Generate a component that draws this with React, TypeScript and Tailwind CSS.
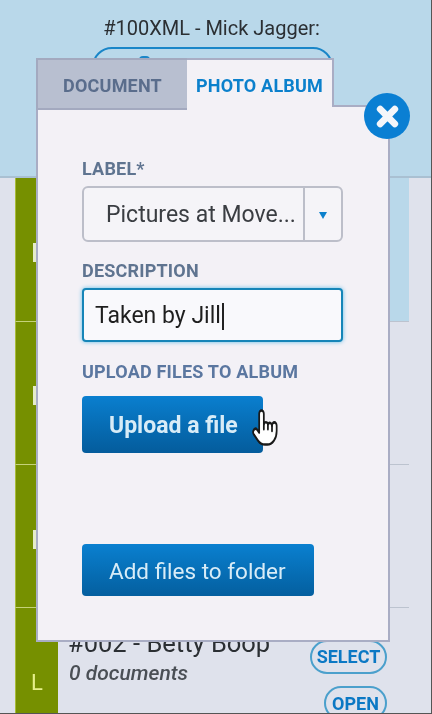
import { FC } from "react";

const font = "font-['Roboto',sans-serif]";

const HandCursor: FC = () => (
  <svg
    viewBox="0 0 24 24"
    className="absolute left-[251px] top-[407px] h-[41px] w-[28px]"
    preserveAspectRatio="none"
    fill="#fff"
    stroke="#1a1a1a"
    strokeWidth="1.5"
    strokeLinecap="round"
    strokeLinejoin="round"
  >
    <path d="M7 15V4a2 2 0 0 1 4 0v6a2 2 0 0 1 3.5 0a2 2 0 0 1 3.5 1a2 2 0 0 1 4 0v3a8 8 0 0 1-8 8h-2c-2.8 0-4.5-.86-6-2.34l-3.6-3.6a2 2 0 0 1 2.83-2.82z" />
    <path d="M11 10v3M14.5 10v3M18 11v3" fill="none" />
  </svg>
);

const Row: FC<{ height: string; main: string; last?: boolean; children?: React.ReactNode }> = ({
  height,
  main,
  last,
  children,
}) => (
  <div className={`flex ${height}`}>
    <div className="w-[15px] bg-[#dfe2ec]" />
    <div className={`relative w-[43px] border-l border-[#a8bb3a] bg-[#769000] ${last ? "" : "border-b border-b-[#c5d27a]"}`}>
      {children}
    </div>
    <div className={`flex-1 ${main} ${last ? "" : "border-b border-[#bcc3cf]"}`} />
    <div className="w-[22px] bg-[#dfe2ec]" />
  </div>
);

const Tick: FC<{ top: string }> = ({ top }) => (
  <div className={`absolute left-[33px] ${top} h-[19px] w-[3px] bg-[#e6eccb]`} />
);

const App: FC = () => {
  return (
    <div className={`relative h-[714px] w-[432px] overflow-hidden border-b border-r border-[#555] bg-[#dfe2ec] blur-[0.4px] ${font}`}>
      {/* page header behind the dialog */}
      <div className="flex h-[178px] flex-col items-center border-b-2 border-[#a9c0d2] bg-[#b9d8ea] pt-[16px]">
        <p className="ml-[-8px] text-[20px] leading-[24px] text-[#2b2f33]">#100XML - Mick Jagger:</p>
        <div className="mt-[7px] ml-[-6px] flex h-[30px] w-[241px] justify-center gap-[4px] rounded-t-[20px] border-2 border-[#1a86c8] pt-[4px] text-[15px] font-bold text-[#1a86c8]">
          <span className="mt-[3px] h-[12px] w-[11px] rounded-t-[4px] bg-[#1a86c8]" />
          GENERATE LABELS
        </div>
      </div>

      <Row height="h-[144px]" main="bg-[#b9d8ea]" />
      <Row height="h-[143px]" main="bg-[#dfe2ec]" />
      <Row height="h-[143px]" main="bg-[#dfe2ec]" />
      <Row height="h-[106px]" main="bg-[#dfe2ec]" last>
        <span className="absolute left-[15px] top-[58px] text-[22px] leading-[34px] text-[#e6f08a]">L</span>
      </Row>

      <Tick top="top-[243px]" />
      <Tick top="top-[386px]" />
      <Tick top="top-[530px]" />

      {/* last row contents */}
      <div className="absolute left-[68px] top-[626px] text-[25.5px] leading-[34px] text-[#2b2f33]">#002 - Betty Boop</div>
      <div className="absolute left-[69px] top-[660px] text-[21px] font-medium italic leading-[26px] text-[#4a4f55]">0 documents</div>
      <div className="absolute left-[310px] top-[640px] flex h-[34px] w-[77px] items-center justify-center rounded-full border-2 border-[#4ba0cc] pb-[1px] text-[18px] font-bold text-[#0b78c4]">
        SELECT
      </div>
      <div className="absolute left-[324px] top-[686px] flex h-[34px] w-[63px] items-center justify-center rounded-full border-2 border-[#4ba0cc] text-[18px] font-bold text-[#0b78c4]">
        OPEN
      </div>

      {/* dialog */}
      <div className="absolute left-[36px] top-[58px] flex h-[584px] w-[354px] flex-col">
        <div className="relative z-10 flex h-[47px] w-[298px] text-[18px] font-bold tracking-[0.2px]">
          <div className="flex h-[52px] w-[151px] items-center justify-center border-2 border-r-0 border-[#a3a9bf] bg-[#b8bfd0] pt-[2px] text-[#5a6d8c]">
            DOCUMENT
          </div>
          <div className="flex h-[49px] w-[147px] items-center justify-center border-r-2 border-t-2 border-[#a9adc4] bg-[#f3f1f6] pt-[3px] text-[#0b80cc]">
            PHOTO ALBUM
          </div>
        </div>
        <div className="flex-1 border-2 border-[#a9adc4] bg-[#f3f1f6] pl-[44px] pt-[52px]">
          <p className="h-[20px] text-[18px] font-bold leading-[20px] tracking-[0.2px] text-[#5f7490]">LABEL*</p>
          <div className="mt-[7px] flex h-[56px] w-[261px] items-center rounded-[6px] border-2 border-[#bcbec9] bg-[#f5f4f8]">
            <span className="w-[219px] pl-[22px] pt-[2px] text-[23px] text-[#3a3d42]">Pictures at Move...</span>
            <span className="flex h-full flex-1 items-center justify-center border-l-2 border-[#bcbec9]">
              <span className="mt-[2px] h-0 w-0 border-x-[4px] border-t-[7px] border-x-transparent border-t-[#0b80cc]" />
            </span>
          </div>
          <p className="mt-[19px] h-[20px] text-[18px] font-bold leading-[20px] tracking-[0.2px] text-[#5f7490]">DESCRIPTION</p>
          <div className="mt-[7px] flex h-[54px] w-[261px] items-center rounded-[4px] border-2 border-[#1685b8] bg-[#f9f9fc] pl-[11px] pt-[3px] text-[23px] text-[#1e1e1e] shadow-[0_0_4px_#62bde6]">
            Taken by Jill
            <span className="ml-[1px] h-[27px] w-[2px] bg-[#222]" />
          </div>
          <p className="mt-[20px] h-[20px] text-[18px] font-bold leading-[20px] tracking-[0.2px] text-[#5b77a0]">UPLOAD FILES TO ALBUM</p>
          <div className="mt-[14px] flex h-[57px] w-[181px] items-center rounded-[4px] bg-gradient-to-b from-[#0a7fcf] to-[#045c9c] pl-[27px] pt-[3px] text-[23px] font-bold text-[#d8ecf7]">
            Upload a file
          </div>
          <div className="mt-[91px] flex h-[52px] w-[232px] items-center rounded-[4px] bg-gradient-to-b from-[#0a80d0] to-[#045f9f] pl-[27px] pt-[3px] text-[22.5px] text-[#d8ecf7]">
            Add files to folder
          </div>
        </div>
      </div>

      <HandCursor />

      {/* close button */}
      <div className="absolute left-[364px] top-[93px] flex h-[46px] w-[46px] items-center justify-center rounded-full bg-[#0a7fd3]">
        <svg viewBox="0 0 24 24" className="h-[25px] w-[25px]" stroke="#f4f6fa" strokeWidth="6.5" strokeLinecap="round">
          <path d="M5 5l14 14M19 5L5 19" />
        </svg>
      </div>
    </div>
  );
};

export default App;
